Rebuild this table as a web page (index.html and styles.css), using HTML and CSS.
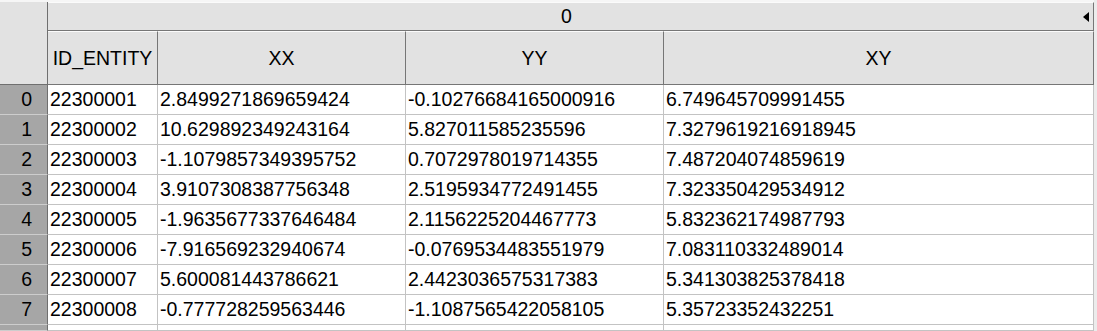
FILE: index.html
```html
<!DOCTYPE html>
<html>
<head>
<meta charset="utf-8">
<link rel="stylesheet" href="styles.css">
</head>
<body>
<div class="sheet">
  <div class="corner"></div>
  <div class="hdr group"><span class="grp-label">0</span><svg class="arrow" width="6" height="10" viewBox="0 0 6 10"><polygon points="6,0 6,10 0,5" fill="#000"/></svg></div>
  <div class="hdr col">ID_ENTITY</div>
  <div class="hdr col">XX</div>
  <div class="hdr col">YY</div>
  <div class="hdr col">XY</div>

  <div class="rh">0</div><div class="cell">22300001</div><div class="cell">2.8499271869659424</div><div class="cell">-0.10276684165000916</div><div class="cell">6.749645709991455</div>
  <div class="rh">1</div><div class="cell">22300002</div><div class="cell">10.629892349243164</div><div class="cell">5.827011585235596</div><div class="cell">7.3279619216918945</div>
  <div class="rh">2</div><div class="cell">22300003</div><div class="cell">-1.1079857349395752</div><div class="cell">0.7072978019714355</div><div class="cell">7.487204074859619</div>
  <div class="rh">3</div><div class="cell">22300004</div><div class="cell">3.9107308387756348</div><div class="cell">2.5195934772491455</div><div class="cell">7.323350429534912</div>
  <div class="rh">4</div><div class="cell">22300005</div><div class="cell">-1.9635677337646484</div><div class="cell">2.1156225204467773</div><div class="cell">5.832362174987793</div>
  <div class="rh">5</div><div class="cell">22300006</div><div class="cell">-7.916569232940674</div><div class="cell">-0.0769534483551979</div><div class="cell">7.083110332489014</div>
  <div class="rh">6</div><div class="cell">22300007</div><div class="cell">5.600081443786621</div><div class="cell">2.4423036575317383</div><div class="cell">5.341303825378418</div>
  <div class="rh">7</div><div class="cell">22300008</div><div class="cell">-0.777728259563446</div><div class="cell">-1.1087565422058105</div><div class="cell">5.35723352432251</div>
  <div class="rh"></div><div class="cell"></div><div class="cell"></div><div class="cell"></div><div class="cell"></div>
</div>
</body>
</html>
```
FILE: styles.css
```css
html, body {
  margin: 0;
  padding: 0;
  background: #ececec;
  height: 331px;
  overflow: hidden;
}
.sheet {
  width: 1094px;
  border-top: 2px solid #f6f6f6;
  display: grid;
  grid-template-columns: 48px 110px 248px 258px 430px;
  grid-template-rows: 29px 54px repeat(8, 30px) 6px;
  font-family: "Liberation Sans", Arial, sans-serif;
  font-size: 19.5px;
  color: #000;
}
.corner {
  grid-column: 1;
  grid-row: 1 / span 2;
  background: #e2e2e2;
  border-right: 1px solid #6f6f6f;
  border-bottom: 1px solid #6f6f6f;
}
.hdr {
  background: #e2e2e2;
  border-left: 1px solid #fbfbfb;
  border-top: 1px solid #fbfbfb;
  border-right: 1px solid #767676;
  border-bottom: 1px solid #767676;
  display: flex;
  align-items: center;
  justify-content: center;
  white-space: nowrap;
  overflow: hidden;
}
.group {
  grid-column: 2 / span 4;
  position: relative;
  border-left: none;
  padding-right: 8px;
}
.grp-label {
  line-height: 1;
}
.arrow {
  position: absolute;
  right: 4px;
  top: 9px;
}
.col {
  border-left: none;
}
.rh {
  background: #a6a6a6;
  border-right: 1px solid #6f6f6f;
  border-bottom: 1px solid #cdcdcd;
  display: flex;
  align-items: center;
  justify-content: flex-end;
  padding-right: 15px;
  overflow: hidden;
}
.cell {
  background: #fff;
  border-right: 1px solid #c3c3c3;
  border-bottom: 1px solid #c3c3c3;
  display: flex;
  align-items: center;
  padding-left: 2px;
  white-space: nowrap;
  overflow: hidden;
}
```
